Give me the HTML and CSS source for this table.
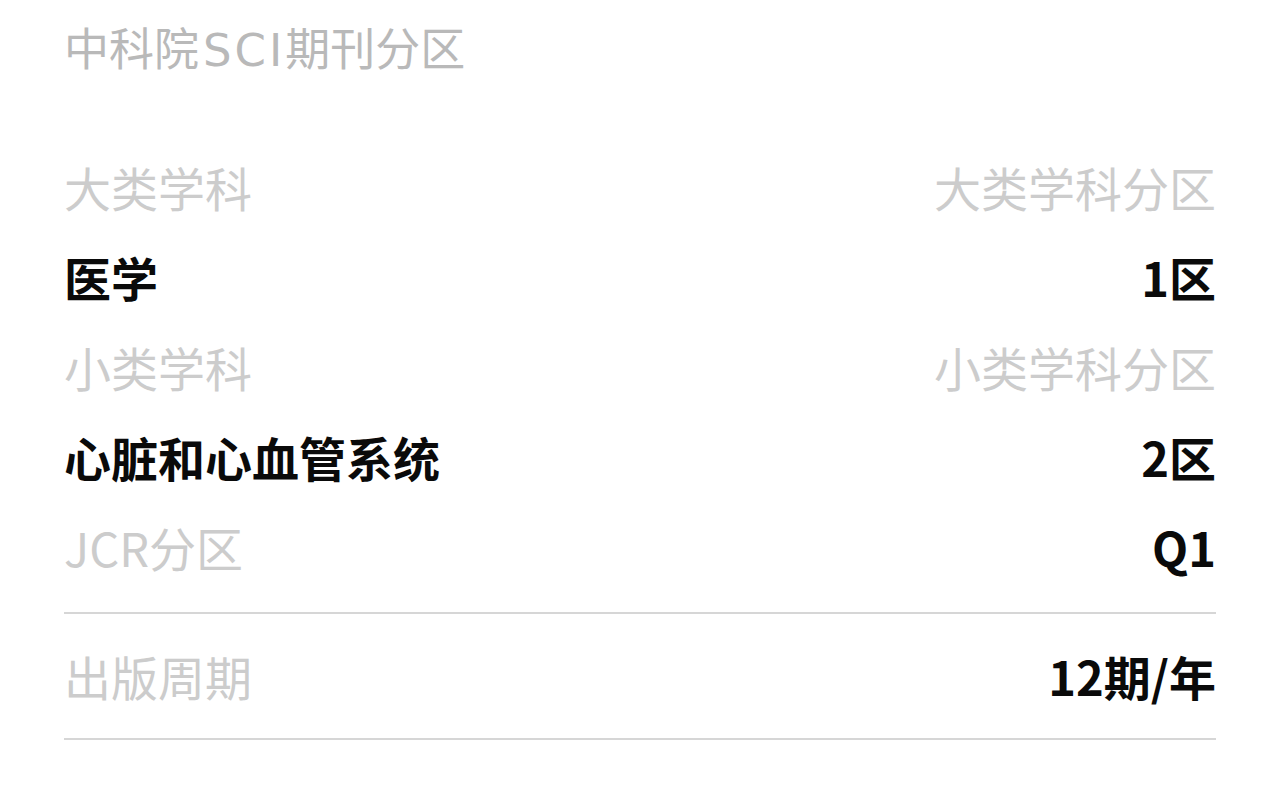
FILE: index.html
```html
<!DOCTYPE html>
<html lang="zh-CN">
<head>
<meta charset="utf-8">
<title>中科院SCI期刊分区</title>
<link rel="stylesheet" href="styles.css">
</head>
<body>
<div class="page">
  <div class="title">中科院<span class="latin">SCI</span>期刊分区</div>
  <div class="group">
    <div class="row"><span class="label">大类学科</span><span class="label">大类学科分区</span></div>
    <div class="row"><span class="value">医学</span><span class="value">1区</span></div>
    <div class="row"><span class="label">小类学科</span><span class="label">小类学科分区</span></div>
    <div class="row"><span class="value">心脏和心血管系统</span><span class="value">2区</span></div>
    <div class="row"><span class="label">JCR分区</span><span class="value">Q1</span></div>
  </div>
  <div class="row row-ruled"><span class="label">出版周期</span><span class="value">12期/年</span></div>
</div>
</body>
</html>
```
FILE: styles.css
```css
html, body {
  margin: 0;
  padding: 0;
  background: #ffffff;
}
body {
  font-family: "Noto Sans CJK SC", "Noto Sans", sans-serif;
}
.page {
  padding: 17px 64px 0;
}
.title {
  font-size: 45px;
  line-height: 60px;
  height: 60px;
  color: #b9b9b9;
}
.title .latin {
  font-family: "DejaVu Sans", "Noto Sans", sans-serif;
  letter-spacing: 3px;
  margin-left: 4px;
  line-height: 1;
}
.group {
  margin-top: 65px;
  padding-bottom: 20px;
  border-bottom: 2px solid #d6d6d6;
}
.row {
  display: flex;
  justify-content: space-between;
  align-items: center;
  font-size: 47px;
  line-height: 90px;
}
.row-ruled {
  padding: 17px 0;
  border-bottom: 2px solid #d6d6d6;
}
.label {
  color: #cccccc;
}
.value {
  color: #0a0a0a;
  font-weight: 700;
}
```
